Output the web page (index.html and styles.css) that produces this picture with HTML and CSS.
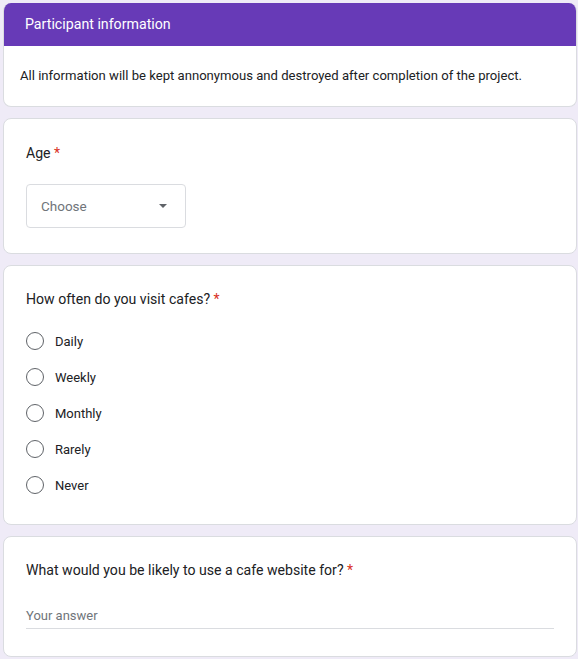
FILE: index.html
```html
<!DOCTYPE html>
<html>
<head>
<meta charset="utf-8">
<link rel="stylesheet" href="styles.css">
</head>
<body>
<div class="form">
  <section class="card intro">
    <div class="intro-head">Participant information</div>
    <div class="intro-body">All information will be kept annonymous and destroyed after completion of the project.</div>
  </section>

  <section class="card question age-card">
    <div class="q-title">Age <span class="req">*</span></div>
    <div class="select">
      <span class="select-text">Choose</span>
      <span class="select-arrow"></span>
    </div>
  </section>

  <section class="card question radios-card">
    <div class="q-title">How often do you visit cafes? <span class="req">*</span></div>
    <div class="radios">
      <label class="radio"><span class="circle"></span><span class="radio-label">Daily</span></label>
      <label class="radio"><span class="circle"></span><span class="radio-label">Weekly</span></label>
      <label class="radio"><span class="circle"></span><span class="radio-label">Monthly</span></label>
      <label class="radio"><span class="circle"></span><span class="radio-label">Rarely</span></label>
      <label class="radio"><span class="circle"></span><span class="radio-label">Never</span></label>
    </div>
  </section>

  <section class="card question text-card">
    <div class="q-title">What would you be likely to use a cafe website for? <span class="req">*</span></div>
    <div class="answer">Your answer</div>
  </section>
</div>
</body>
</html>
```

FILE: styles.css
```css
html, body {
  margin: 0;
  padding: 0;
  background: #efebf7;
}
body {
  font-family: Roboto, "Liberation Sans", Arial, sans-serif;
  color: #202124;
}
.form {
  display: flex;
  flex-direction: column;
  gap: 11px;
  padding: 3px 1px 0 3px;
}
.card {
  background: #ffffff;
  border: 1px solid #dadce0;
  border-radius: 8px;
  overflow: hidden;
}
.intro {
  border-top: none;
}
.intro-head {
  background: #673ab7;
  color: #ffffff;
  height: 43px;
  line-height: 43px;
  font-size: 14.2px;
  padding-left: 21px;
}
.intro-body {
  font-size: 13.1px;
  line-height: 20px;
  padding: 20px 16px 20px 16px;
}
.question {
  padding: 23px 22px 24px 22px;
}
.age-card {
  padding-top: 24px;
  padding-bottom: 25px;
}
.age-card .select {
  margin-top: 21px;
}
.q-title {
  font-size: 14.1px;
  line-height: 20px;
}
.req {
  color: #d93025;
}
.select {
  margin-top: 22px;
  height: 42px;
  border: 1px solid #dadce0;
  border-radius: 4px;
  display: flex;
  align-items: center;
  justify-content: space-between;
  padding: 0 18px 0 14px;
  box-sizing: content-box;
  width: 126px;
}
.select-text {
  font-size: 13.5px;
  color: #70757a;
}
.select-arrow {
  width: 0;
  height: 0;
  border-left: 4px solid transparent;
  border-right: 4px solid transparent;
  border-top: 4px solid #5f6368;
}
.radios-card {
  padding-bottom: 21px;
}
.radios {
  margin-top: 14px;
  display: flex;
  flex-direction: column;
}
.radio {
  display: flex;
  align-items: center;
  height: 36px;
}
.circle {
  width: 18px;
  height: 18px;
  box-sizing: border-box;
  border: 1.5px solid #5f6368;
  border-radius: 50%;
  margin-right: 11px;
}
.radio-label {
  font-size: 13px;
}
.text-card {
  padding-bottom: 27px;
}
.answer {
  margin-top: 24px;
  line-height: 24px;
  font-size: 13px;
  color: #70757a;
  border-bottom: 1px solid #dadce0;
  box-sizing: border-box;
  height: 25px;
}
```
